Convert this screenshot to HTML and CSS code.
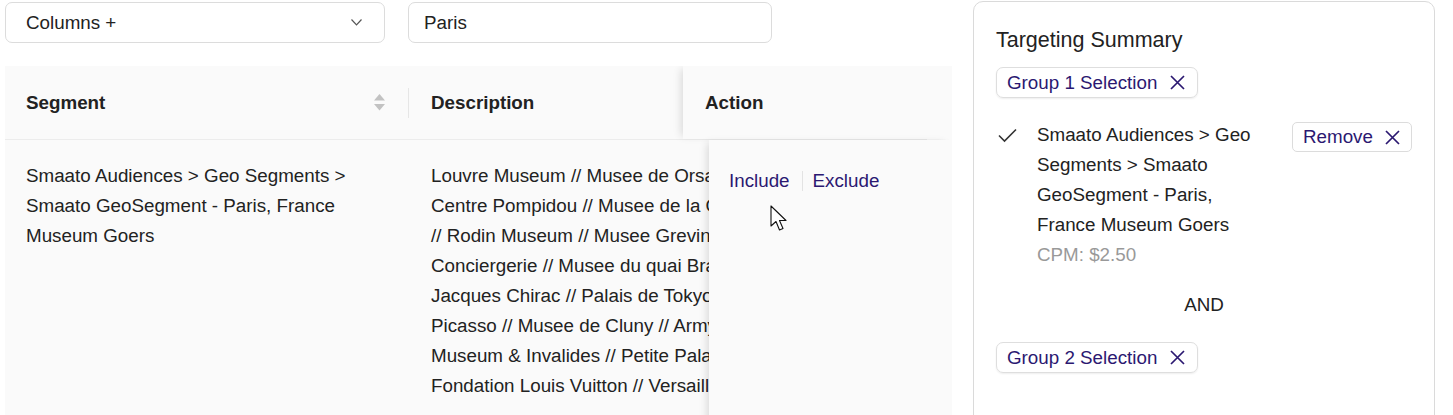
FILE: index.html
```html
<!DOCTYPE html>
<html>
<head>
  <title>Segment Targeting</title>
  <link rel="stylesheet" href="styles.css">
</head>
<body>
  <div class="page">
    <div class="main">
      <div class="controls">
        <div class="select-box">
          <span>Columns +</span>
          <svg class="chevron" width="11" height="7" viewBox="0 0 11 7"><polyline points="0.5,0.5 5.5,5.8 10.5,0.5" fill="none" stroke="#555" stroke-width="1.2"/></svg>
        </div>
        <div class="search-box">Paris</div>
      </div>

      <div class="table">
        <div class="thead">
          <div class="th th-segment">
            <span>Segment</span>
            <svg class="sort" width="11" height="17" viewBox="0 0 11 17"><polygon points="5.5,0 11,6.5 0,6.5" fill="#c2c2c2"/><polygon points="0,10 11,10 5.5,16.5" fill="#c2c2c2"/></svg>
          </div>
          <div class="th-divider"></div>
          <div class="th th-desc">Description</div>
          <div class="th th-action">Action</div>
        </div>

        <div class="trow">
          <div class="td td-segment">Smaato Audiences &gt; Geo Segments &gt; Smaato GeoSegment - Paris, France Museum Goers</div>
          <div class="td td-desc">
            Louvre Museum // Musee de Orsay // Musee<br>
            Centre Pompidou // Musee de la Orangerie<br>
            // Rodin Museum // Musee Grevin // Paris<br>
            Conciergerie // Musee du quai Branly -<br>
            Jacques Chirac // Palais de Tokyo // Musee<br>
            Picasso // Musee de Cluny // Army<br>
            Museum &amp; Invalides // Petite Palais //<br>
            Fondation Louis Vuitton // Versailles
          </div>
          <div class="td td-action">
            <a class="action-link">Include</a>
            <span class="action-sep"></span>
            <a class="action-link">Exclude</a>
            <svg class="cursor" width="20" height="28" viewBox="0 0 20 28"><path d="M1 1 L1 21 L6 16.5 L9.5 25 L13 23.5 L9.5 15.5 L16 15.5 Z" fill="#fff" stroke="#111" stroke-width="1.1" stroke-linejoin="round"/></svg>
          </div>
        </div>
      </div>
    </div>

    <div class="sidebar">
      <h2 class="summary-title">Targeting Summary</h2>
      <div class="chip-row first">
        <span class="chip">Group 1 Selection
          <svg class="x-icon" width="15" height="15" viewBox="0 0 15 15"><path d="M1 1 L14 14 M14 1 L1 14" stroke="currentColor" stroke-width="1.7"/></svg>
        </span>
      </div>

      <div class="selected-item">
        <svg class="check" width="19" height="15" viewBox="0 0 19 15"><polyline points="1,7.5 6.5,13 18,1.5" fill="none" stroke="#333" stroke-width="1.6"/></svg>
        <div class="item-text">
          Smaato Audiences &gt; Geo Segments &gt; Smaato GeoSegment - Paris, France Museum Goers
          <div class="cpm">CPM: $2.50</div>
        </div>
        <button class="remove-btn">Remove
          <svg class="x-icon" width="15" height="15" viewBox="0 0 15 15"><path d="M1 1 L14 14 M14 1 L1 14" stroke="currentColor" stroke-width="1.7"/></svg>
        </button>
      </div>

      <div class="and-label">AND</div>

      <div class="chip-row">
        <span class="chip">Group 2 Selection
          <svg class="x-icon" width="15" height="15" viewBox="0 0 15 15"><path d="M1 1 L14 14 M14 1 L1 14" stroke="currentColor" stroke-width="1.7"/></svg>
        </span>
      </div>
    </div>
  </div>
</body>
</html>
```

FILE: styles.css
```css
body { margin: 0; font-family: "Liberation Sans", Arial, sans-serif; font-size: 18.8px; color: #222; background: #fff; overflow: hidden; }
.page { display: flex; gap: 21px; padding: 1px 0 0 5px; align-items: flex-start; }
.main { width: 947px; }

.controls { display: flex; gap: 23px; margin-top: 1px; }
.select-box { width: 380px; height: 41px; box-sizing: border-box; border: 1px solid #dcdcdc; border-radius: 7px; display: flex; align-items: center; justify-content: space-between; padding: 0 22px 0 20px; }
.chevron { display: block; }
.search-box { width: 364px; height: 41px; box-sizing: border-box; border: 1px solid #dcdcdc; border-radius: 7px; display: flex; align-items: center; padding-left: 15px; }

.table { margin-top: 23px; background: #fafafa; overflow: hidden; }
.thead { display: flex; align-items: center; height: 73px; border-bottom: 1px solid #ececec; margin-right: 25px; }
.th { font-weight: bold; height: 100%; display: flex; align-items: center; box-sizing: border-box; }
.th-segment { width: 403px; padding: 0 23px 0 21px; justify-content: space-between; }
.sort { display: block; }
.th-divider { width: 1px; height: 30px; background: #e6e6e6; }
.th-desc { width: 274px; padding-left: 22px; }
.th-action { flex: 1; padding-left: 22px; background: #fafafa; box-shadow: -5px 0 8px -3px rgba(0, 0, 0, 0.13); position: relative; z-index: 1; margin-right: -25px; }

.trow { display: flex; min-height: 300px; }
.td { line-height: 30px; box-sizing: border-box; padding-top: 21px; }
.td-segment { width: 404px; padding-left: 21px; padding-right: 21px; }
.td-desc { width: 300px; padding-left: 22px; white-space: nowrap; overflow: hidden; }
.td-action { flex: 1; padding: 26px 0 0 20px; line-height: 30px; background: #fafafa; box-shadow: -5px 0 8px -3px rgba(0, 0, 0, 0.13); position: relative; z-index: 1; display: flex; align-items: flex-start; }
.action-link { color: #2b1871; cursor: pointer; }
.action-sep { width: 1px; height: 20px; background: #e3e3e3; margin: 5px 10px 0 12px; }
.cursor { position: absolute; left: 61px; top: 65px; }

.sidebar { width: 462px; box-sizing: border-box; border: 1px solid #dadada; border-radius: 10px; padding: 23px 22px 80px 22px; }
.summary-title { margin: 0; font-size: 21.5px; font-weight: normal; line-height: 30px; }
.chip-row { display: flex; margin-top: 22px; }
.chip-row.first { margin-top: 12px; }
.chip { display: flex; align-items: center; gap: 13px; height: 31px; box-sizing: border-box; border: 1px solid #dedede; border-radius: 7px; padding: 0 12px 0 10px; color: #2b1871; box-shadow: 0 1px 2px rgba(0, 0, 0, 0.07); }
.x-icon { display: block; }

.selected-item { display: flex; align-items: flex-start; margin-top: 22px; line-height: 30px; }
.check { margin: 8px 0 0 2px; flex-shrink: 0; }
.item-text { width: 228px; margin-left: 20px; }
.cpm { color: #999; }
.remove-btn { margin: 2px 0 0 auto; height: 30px; width: 120px; box-sizing: border-box; border: 1px solid #dcdcdc; border-radius: 5px; background: #fff; color: #2b1871; font: inherit; display: flex; align-items: center; justify-content: space-between; padding: 0 11px 0 10px; }

.and-label { text-align: center; margin-top: 20px; line-height: 30px; }
```
